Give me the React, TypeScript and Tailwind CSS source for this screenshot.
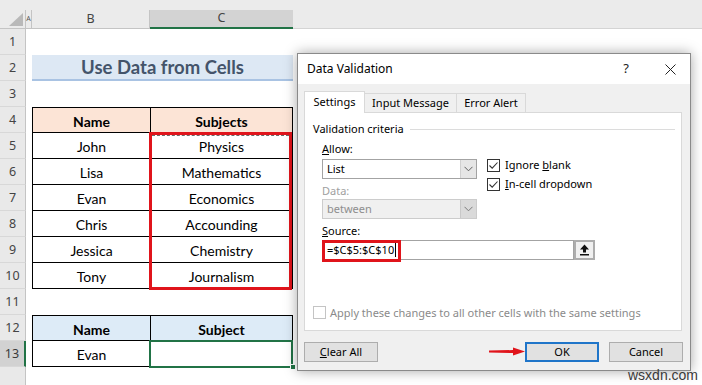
import React from 'react';

type Row = {
  n: number;
  b?: string;
  c?: string;
  head?: 'peach' | 'blue';
  top?: boolean;
  title?: boolean;
};

const rows: Row[] = [
  { n: 1 },
  { n: 2, title: true },
  { n: 3 },
  { n: 4, b: 'Name', c: 'Subjects', head: 'peach', top: true },
  { n: 5, b: 'John', c: 'Physics' },
  { n: 6, b: 'Lisa', c: 'Mathematics' },
  { n: 7, b: 'Evan', c: 'Economics' },
  { n: 8, b: 'Chris', c: 'Accounding' },
  { n: 9, b: 'Jessica', c: 'Chemistry' },
  { n: 10, b: 'Tony', c: 'Journalism' },
  { n: 11 },
  { n: 12, b: 'Name', c: 'Subject', head: 'blue', top: true },
  { n: 13, b: 'Evan', c: '' },
];

const Chevron = ({ color = '#5f5f5f' }: { color?: string }) => (
  <svg width="9" height="6" viewBox="0 0 9 6">
    <polyline points="0.5,0.8 4.5,4.8 8.5,0.8" fill="none" stroke={color} strokeWidth="1" />
  </svg>
);

const Check = ({ checked, disabled }: { checked?: boolean; disabled?: boolean }) => (
  <div
    className={`w-[13px] h-[13px] border bg-white flex items-center justify-center ${
      disabled ? 'border-[#c4c4c4]' : 'border-[#333333]'
    }`}
  >
    {checked && (
      <svg width="11" height="11" viewBox="0 0 11 11">
        <polyline points="1.5,5.5 4.2,8.2 9.5,2.5" fill="none" stroke="#333333" strokeWidth="1.1" />
      </svg>
    )}
  </div>
);

const RowHead = ({ n, active }: { n?: number; active?: boolean }) => (
  <div
    className={`w-[26px] shrink-0 flex items-center justify-center pt-[2px] text-[12.5px] border-b border-[#d8d8d8] font-['Noto_Sans',sans-serif] ${
      active
        ? 'bg-[#d2d2d2] border-r-2 border-r-[#217346] text-[#3a3a3a]'
        : 'bg-[#e9e9e9] border-r border-r-[#c4c4c4] text-[#444444]'
    }`}
  >
    {n}
  </div>
);

function Sheet() {
  return (
    <div className="font-['Lato',sans-serif] text-[14px] text-black">
      {/* column headers */}
      <div className="h-[29px] flex items-end bg-[#ebebeb]">
        <div className="w-[26px] h-[19px] border-r border-b border-[#c4c4c4] flex items-end justify-end pr-[2px] pb-[2px]">
          <svg width="14" height="13" viewBox="0 0 14 13">
            <polygon points="14,0 14,13 0,13" fill="#b9b9b9" />
          </svg>
        </div>
        <div className="w-[6px] h-[19px] border-r border-b border-[#c4c4c4] flex items-center justify-center text-[7px] text-[#555] font-['Noto_Sans',sans-serif]">
          A
        </div>
        <div className="w-[118px] h-[19px] border-r border-b border-[#c4c4c4] flex items-center justify-center text-[12.5px] text-[#444] font-['Noto_Sans',sans-serif]">
          B
        </div>
        <div className="w-[143px] h-[19px] bg-[#d3d3d3] border-b-2 border-[#217346] flex items-center justify-center text-[12.5px] text-[#444] font-['Noto_Sans',sans-serif]">
          C
        </div>
        <div className="flex-1 h-[19px] border-b border-[#d4d4d4]" />
      </div>

      {rows.map((r) => (
        <div key={r.n} className="flex h-[26px]">
          <RowHead n={r.n} active={r.n === 13} />
          <div className="w-[6px]" />
          {r.title ? (
            <div className="w-[261px] bg-[#dde8f4] border-b-2 border-[#a9c3e3] flex items-center justify-center font-bold text-[18.5px] text-[#44546a] pt-[1px]">
              Use Data from Cells
            </div>
          ) : r.b !== undefined ? (
            <>
              <div
                className={`w-[118px] flex items-center justify-center pt-[2px] border-l border-b border-black ${
                  r.top ? 'border-t' : ''
                } ${r.head === 'peach' ? 'bg-[#fce4d6]' : r.head === 'blue' ? 'bg-[#ddebf7]' : ''} ${
                  r.head ? 'font-bold' : ''
                }`}
              >
                {r.b}
              </div>
              <div
                className={`w-[143px] flex items-center justify-center pt-[2px] border-l border-r border-b border-black ${
                  r.top ? 'border-t' : ''
                } ${r.head === 'peach' ? 'bg-[#fce4d6]' : r.head === 'blue' ? 'bg-[#ddebf7]' : ''} ${
                  r.head ? 'font-bold' : ''
                }`}
              >
                {r.c}
              </div>
            </>
          ) : null}
        </div>
      ))}
      <div className="flex h-[26px]">
        <RowHead />
      </div>
    </div>
  );
}

function Dialog() {
  return (
    <div className="absolute left-[297px] top-[53px] w-[394px] h-[318px] border border-[#8a8a8a] bg-[#f0f0f0] shadow-[0_0_12px_rgba(0,0,0,0.35)] flex flex-col font-['Noto_Sans',sans-serif] text-[11px] text-black">
      {/* title bar */}
      <div className="h-[30px] bg-white flex items-center pl-[9px] pr-[14px] shrink-0">
        <span className="text-[12px]">Data Validation</span>
        <span className="ml-auto text-[13px] text-[#222]">?</span>
        <svg className="ml-[36px]" width="11" height="11" viewBox="0 0 11 11">
          <path d="M0.5 0.5 L10.5 10.5 M10.5 0.5 L0.5 10.5" stroke="#222" strokeWidth="1" />
        </svg>
      </div>

      <div className="flex-1 flex flex-col pl-[6px] pr-[8px] pt-[7px]">
        {/* tabs */}
        <div className="flex items-end h-[21px] relative z-10">
          <div className="w-[61px] h-[22px] -mb-px bg-white border-t border-l border-r border-[#d9d9d9] flex items-center justify-center pb-px">
            Settings
          </div>
          <div className="w-[92px] h-[19px] border-t border-r border-[#d9d9d9] flex items-center justify-center">
            Input Message
          </div>
          <div className="w-[69px] h-[19px] border-t border-r border-[#d9d9d9] flex items-center justify-center">
            Error Alert
          </div>
        </div>

        {/* panel */}
        <div className="h-[219px] bg-white border border-[#d9d9d9] flex flex-col pt-[8px] pl-[8px] pr-[6px]">
          <div className="flex items-center h-[16px]">
            <span>Validation criteria</span>
            <div className="flex-1 ml-[6px] border-t border-[#dcdcdc]" />
          </div>

          <div className="pl-[9px]">
            <div className="mt-[4px] h-[16px] leading-[16px]">
              <span className="underline">A</span>llow:
            </div>
            <div className="flex mt-[2px]">
              <div className="w-[155px] flex flex-col">
                <div className="h-[20px] border border-[#a3a3a3] bg-white flex">
                  <div className="flex-1 flex items-center pl-[4px]">List</div>
                  <div className="w-[16px] bg-[#e6e6e6] border-l border-[#d0d0d0] flex items-center justify-center">
                    <Chevron />
                  </div>
                </div>
                <div className="mt-[4px] h-[16px] leading-[16px] text-[#a0a0a0]">Data:</div>
                <div className="h-[20px] border border-[#cccccc] bg-[#f0f0f0] flex">
                  <div className="flex-1 flex items-center pl-[4px] text-[#8e8e8e]">between</div>
                  <div className="w-[16px] bg-[#dadada] border-l border-[#c8c8c8] flex items-center justify-center">
                    <Chevron color="#7a7a7a" />
                  </div>
                </div>
              </div>
              <div className="ml-[10px] flex flex-col gap-[6px]">
                <div className="flex items-center h-[13px] gap-[5px]">
                  <Check checked />
                  <span>
                    Ignore <span className="underline">b</span>lank
                  </span>
                </div>
                <div className="flex items-center h-[13px] gap-[5px]">
                  <Check checked />
                  <span>
                    <span className="underline">I</span>n-cell dropdown
                  </span>
                </div>
              </div>
            </div>
            <div className="mt-[4px] h-[16px] leading-[16px]">
              <span className="underline">S</span>ource:
            </div>
            <div className="flex mt-px h-[20px]">
              <div className="w-[252px] relative border border-[#a3a3a3] bg-white flex items-center pl-[4px]">
                <span>=$C$5:$C$10</span>
                <div className="w-px h-[14px] bg-black ml-px" />
                <div className="absolute -left-px -top-px w-[79px] h-[22px] border-[3px] border-[#e0141b]" />
              </div>
              <div className="w-[21px] border-2 border-[#adadad] bg-[#f0f0f0] flex items-center justify-center">
                <svg width="11" height="12" viewBox="0 0 11 12">
                  <polygon points="5.5,0.5 10,5.5 7,5.5 7,8.5 4,8.5 4,5.5 1,5.5" fill="#111" />
                  <rect x="1" y="10" width="9" height="1.5" fill="#111" />
                </svg>
              </div>
            </div>
          </div>

          <div className="mt-auto mb-[9px] flex items-center gap-[4px]">
            <Check disabled />
            <span className="text-[#8a8a8a]">Apply these changes to all other cells with the same settings</span>
          </div>
        </div>

        {/* buttons */}
        <div className="flex mt-[11px] h-[20px]">
          <button className="w-[74px] border border-[#adadad] bg-[#e1e1e1] flex items-center justify-center">
            <span>
              <span className="underline">C</span>lear All
            </span>
          </button>
          <button className="ml-auto w-[74px] border-2 border-[#1f75c9] bg-[#e1e1e1] flex items-center justify-center">
            OK
          </button>
          <button className="ml-[10px] -mr-px w-[74px] border border-[#adadad] bg-[#e1e1e1] flex items-center justify-center">
            Cancel
          </button>
        </div>
      </div>
    </div>
  );
}

export default function App() {
  return (
    <div className="relative w-[702px] h-[385px] overflow-hidden bg-white">
      <Sheet />

      {/* source range highlight */}
      <div className="absolute left-[149px] top-[132px] w-[143px] h-[158px] border-[3px] border-[#e0141b]" />
      <div className="absolute left-[152px] top-[135px] w-[137px] border-t border-dashed border-[#6b6b6b]" />

      {/* selected cell C13 */}
      <div className="absolute left-[149px] top-[340px] w-[144px] h-[28px] border-2 border-[#217346]" />
      <div className="absolute left-[290px] top-[364px] w-[6px] h-[6px] bg-[#217346] border border-white" />

      <Dialog />

      {/* red arrow */}
      <svg className="absolute left-[489px] top-[347px]" width="36" height="9" viewBox="0 0 36 9">
        <polygon points="0,3.6 24,3 24,0.5 36,4.5 24,8.5 24,6 0,5.4" fill="#e0141b" />
      </svg>

      <div className="absolute left-[628px] top-[366px] text-[14px] leading-[18px] text-[#3a3a3a] font-['Liberation_Sans',sans-serif]">
        wsxdn.com
      </div>
    </div>
  );
}
